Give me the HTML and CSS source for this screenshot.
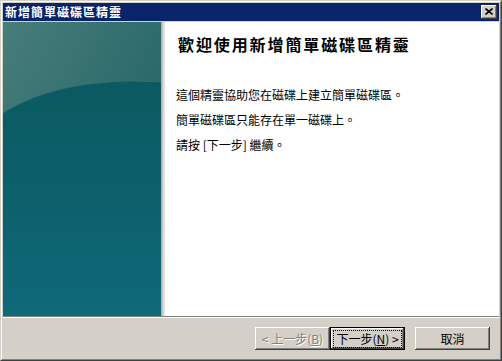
FILE: index.html
```html
<!DOCTYPE html>
<html lang="zh-Hant">
<head>
<meta charset="utf-8">
<title>新增簡單磁碟區精靈</title>
<link rel="stylesheet" href="styles.css">
</head>
<body>
<div class="window">
  <div class="frame">
    <div class="titlebar">
      <span class="title">新增簡單磁碟區精靈</span>
      <button class="close" aria-label="關閉">
        <svg width="8" height="7" viewBox="0 0 8 7"><path d="M0.5 0.5 L7.5 6.5 M7.5 0.5 L0.5 6.5" stroke="#000" stroke-width="1.6" fill="none"/></svg>
      </button>
    </div>
    <div class="body">
      <div class="banner">
        <svg width="158" height="294" viewBox="0 0 158 294" preserveAspectRatio="none">
          <defs>
            <linearGradient id="top" x1="0" y1="0" x2="1" y2="1">
              <stop offset="0" stop-color="#477d7b"/>
              <stop offset="0.5" stop-color="#2f6c6c"/>
              <stop offset="1" stop-color="#1d5e5e"/>
            </linearGradient>
            <linearGradient id="bot" x1="0" y1="0" x2="0" y2="1">
              <stop offset="0" stop-color="#0b5a61"/>
              <stop offset="0.5" stop-color="#0c606c"/>
              <stop offset="1" stop-color="#0f6979"/>
            </linearGradient>
          </defs>
          <rect x="0" y="0" width="158" height="294" fill="url(#top)"/>
          <path d="M0 91 C30 72 70 60 130 59 L158 60 L158 294 L0 294 Z" fill="url(#bot)"/>
          <path d="M0 91 C30 72 70 60 130 59 L158 60" stroke="#3a7474" stroke-width="1" fill="none" opacity="0.6"/>
        </svg>
      </div>
      <div class="shade"></div>
      <div class="content">
        <h1 class="heading">歡迎使用新增簡單磁碟區精靈</h1>
        <p class="line first">這個精靈協助您在磁碟上建立簡單磁碟區。</p>
        <p class="line">簡單磁碟區只能存在單一磁碟上。</p>
        <p class="line">請按 [下一步] 繼續。</p>
      </div>
    </div>
    <div class="sep"></div>
    <div class="footer">
      <button class="btn disabled">&lt; 上一步(<u>B</u>)</button>
      <button class="btn default"><span class="focus">下一步(<u>N</u>) &gt;</span></button>
      <button class="btn cancel">取消</button>
    </div>
  </div>
</div>
</body>
</html>
```

FILE: styles.css
```css
html, body {
  margin: 0;
  padding: 0;
  background: #d4d0c8;
}

.window {
  width: 502px;
  height: 361px;
  box-sizing: border-box;
  border-style: solid;
  border-width: 1px;
  border-color: #d4d0c8 #404040 #404040 #d4d0c8;
  font-family: "Noto Sans CJK TC", "Liberation Sans", sans-serif;
  font-size: 12px;
}

.frame {
  height: 100%;
  box-sizing: border-box;
  border-style: solid;
  border-width: 1px;
  border-color: #ffffff #808080 #808080 #ffffff;
  padding: 1px;
  background: #d4d0c8;
  display: flex;
  flex-direction: column;
}

.titlebar {
  height: 18px;
  flex: none;
  background: #0a246a;
  display: flex;
  align-items: center;
  justify-content: space-between;
  padding: 0 2px 0 2px;
  margin-bottom: 1px;
}

.title {
  color: #fff;
  font-weight: bold;
  font-size: 12px;
  letter-spacing: 1px;
  line-height: 18px;
}

.close {
  width: 16px;
  height: 14px;
  padding: 0 0 1px 0;
  border: 0;
  background: #d4d0c8;
  box-shadow: inset -1px -1px #404040, inset 1px 1px #ffffff, inset -2px -2px #808080;
  display: flex;
  align-items: center;
  justify-content: center;
}

.body {
  height: 294px;
  flex: none;
  display: flex;
  background: #fff;
}

.banner {
  width: 158px;
  flex: none;
  display: flex;
}

.banner svg {
  display: block;
}

.shade {
  width: 5px;
  flex: none;
  background: linear-gradient(to right, #a9a9a9, #d8d8d8 50%, #ffffff);
}

.content {
  flex: 1;
  padding: 12px 0 0 10px;
  color: #000;
}

.heading {
  margin: 0 0 0 2px;
  font-size: 16px;
  line-height: 20px;
  font-weight: bold;
  letter-spacing: 1.9px;
}

.line {
  margin: 0;
  font-size: 12px;
  line-height: 25px;
}

.line.first {
  margin-top: 28px;
}

.sep {
  height: 2px;
  flex: none;
  border-top: 1px solid #808080;
  border-bottom: 1px solid #ffffff;
  box-sizing: border-box;
}

.footer {
  height: 40px;
  flex: none;
  display: flex;
  justify-content: flex-end;
  align-items: flex-start;
  padding: 9px 9px 0 0;
  box-sizing: border-box;
}

.btn {
  width: 75px;
  height: 23px;
  box-sizing: border-box;
  border: 0;
  padding: 0;
  background: #d4d0c8;
  font-family: "Noto Sans CJK TC", "Liberation Sans", sans-serif;
  font-size: 12px;
  color: #000;
  box-shadow: inset -1px -1px #404040, inset 1px 1px #ffffff, inset -2px -2px #808080, inset 2px 2px #d4d0c8;
  display: flex;
  align-items: center;
  justify-content: center;
  line-height: 14px;
  white-space: nowrap;
}

.btn.disabled {
  color: #808080;
  text-shadow: 1px 1px #ffffff;
}

.btn.default {
  border: 1px solid #000;
}

.btn.cancel {
  margin-left: 10px;
}

.focus {
  display: block;
  border: 1px dotted #000;
  padding: 1px 2px;
  white-space: nowrap;
}

u {
  text-decoration: underline;
  text-underline-offset: 1px;
}
```
